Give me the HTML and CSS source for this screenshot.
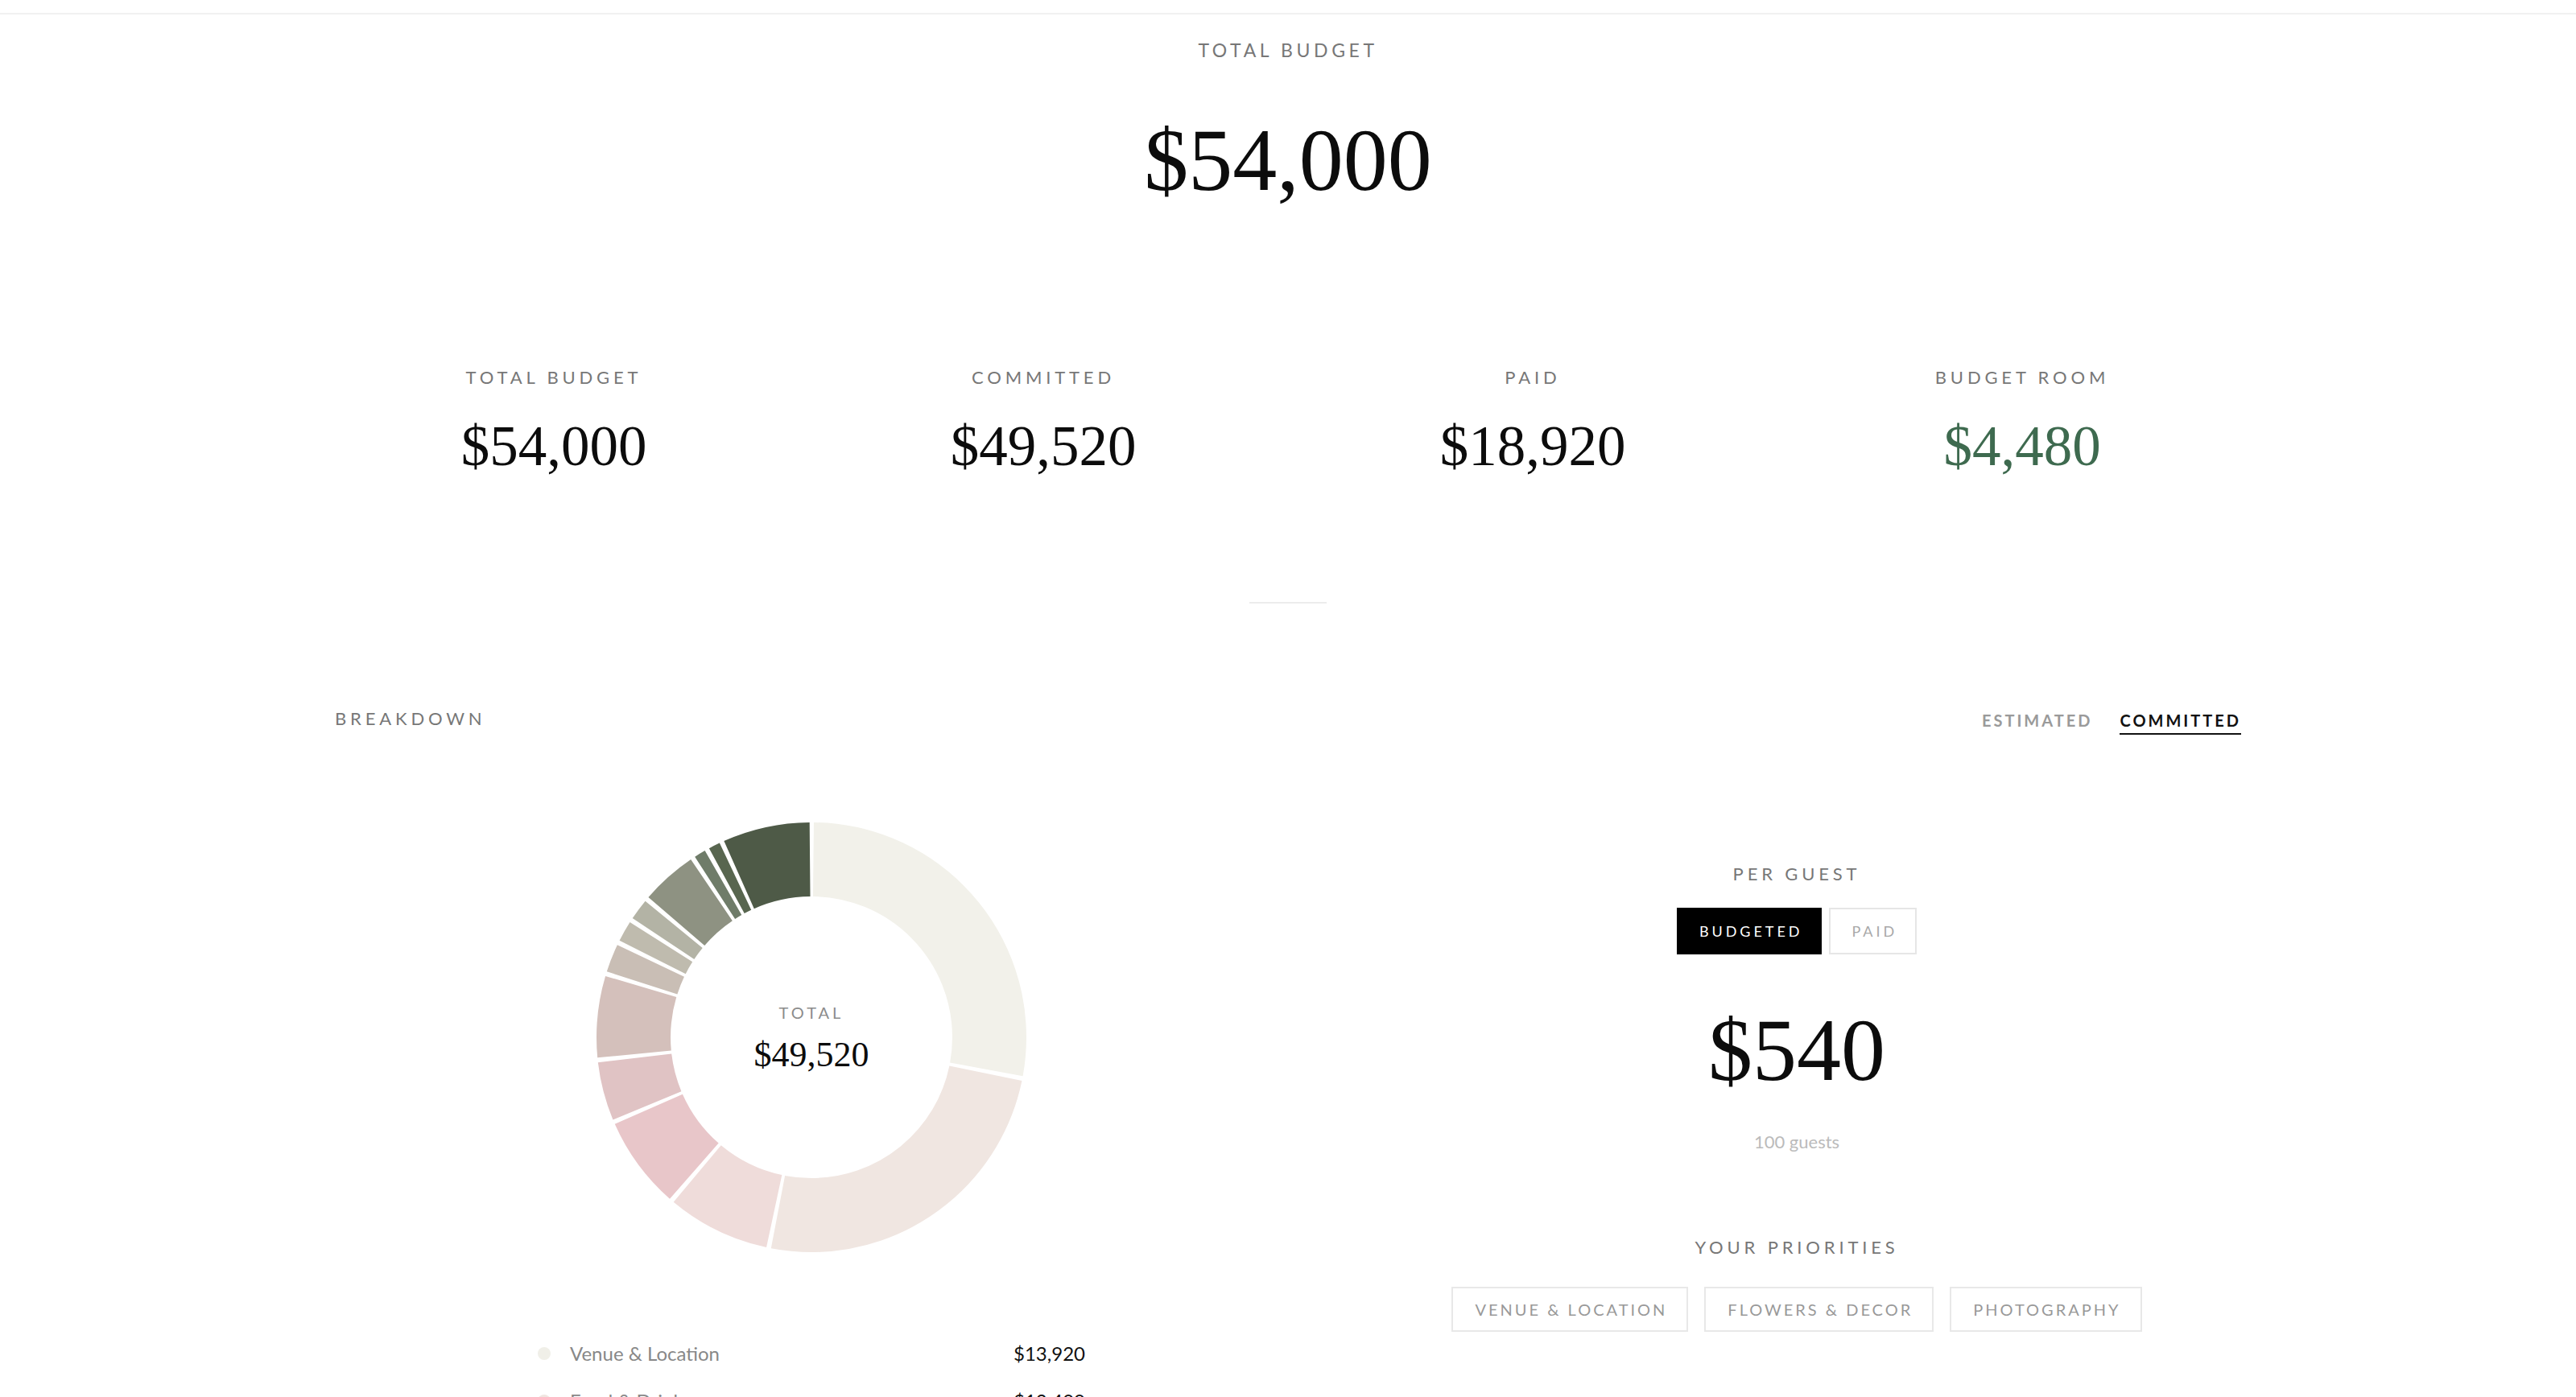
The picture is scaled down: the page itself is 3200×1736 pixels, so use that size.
FILE: index.html
```html
<!DOCTYPE html>
<html lang="en">
<head>
<meta charset="utf-8">
<title>Budget</title>
<link rel="stylesheet" href="styles.css">
</head>
<body>
<div class="topbar"></div>
<main class="page">
  <section class="hero">
    <div class="hero-title">TOTAL BUDGET</div>
    <div class="hero-amount">$54,000</div>
  </section>

  <section class="stats">
    <div class="stat">
      <div class="stat-label">TOTAL BUDGET</div>
      <div class="stat-value">$54,000</div>
    </div>
    <div class="stat">
      <div class="stat-label">COMMITTED</div>
      <div class="stat-value">$49,520</div>
    </div>
    <div class="stat">
      <div class="stat-label">PAID</div>
      <div class="stat-value">$18,920</div>
    </div>
    <div class="stat">
      <div class="stat-label">BUDGET ROOM</div>
      <div class="stat-value stat-value-green">$4,480</div>
    </div>
  </section>

  <div class="divider"></div>

  <section class="breakdown-head">
    <div class="section-label">BREAKDOWN</div>
    <div class="tabs">
      <span class="tab">ESTIMATED</span>
      <span class="tab tab-active">COMMITTED</span>
    </div>
  </section>

  <section class="breakdown-body">
    <div class="chart-col">
      <div class="donut">
        <svg class="donut-svg" width="540" height="540" viewBox="0 0 540 540">
          <g transform="rotate(-90 270 270)" fill="none" stroke-width="92">
            <circle cx="270" cy="270" r="221" stroke="#f2f1ea" stroke-dasharray="384.6 1400" stroke-dashoffset="-2.5"/>
            <circle cx="270" cy="270" r="221" stroke="#f0e6e1" stroke-dasharray="343.7 1400" stroke-dashoffset="-392.1"/>
            <circle cx="270" cy="270" r="221" stroke="#efdcda" stroke-dasharray="107.2 1400" stroke-dashoffset="-740.7"/>
            <circle cx="270" cy="270" r="221" stroke="#e8c6c9" stroke-dasharray="96.1 1400" stroke-dashoffset="-853.0"/>
            <circle cx="270" cy="270" r="221" stroke="#e0c3c4" stroke-dasharray="61.0 1400" stroke-dashoffset="-954.0"/>
            <circle cx="270" cy="270" r="221" stroke="#d4c0bb" stroke-dasharray="84.9 1400" stroke-dashoffset="-1020.0"/>
            <circle cx="270" cy="270" r="221" stroke="#c9beb5" stroke-dasharray="29.3 1400" stroke-dashoffset="-1109.8"/>
            <circle cx="270" cy="270" r="221" stroke="#bfbbae" stroke-dasharray="21.6 1400" stroke-dashoffset="-1144.2"/>
            <circle cx="270" cy="270" r="221" stroke="#b3b3a5" stroke-dasharray="22.0 1400" stroke-dashoffset="-1170.8"/>
            <circle cx="270" cy="270" r="221" stroke="#8e9282" stroke-dasharray="58.6 1400" stroke-dashoffset="-1197.8"/>
            <circle cx="270" cy="270" r="221" stroke="#6f7c69" stroke-dasharray="12.0 1400" stroke-dashoffset="-1261.4"/>
            <circle cx="270" cy="270" r="221" stroke="#58664f" stroke-dasharray="12.0 1400" stroke-dashoffset="-1278.4"/>
            <circle cx="270" cy="270" r="221" stroke="#4e5a47" stroke-dasharray="90.7 1400" stroke-dashoffset="-1295.4"/>
          </g>
        </svg>
        <div class="donut-center">
          <div class="donut-label">TOTAL</div>
          <div class="donut-value">$49,520</div>
        </div>
      </div>

      <ul class="legend">
        <li class="legend-row"><span class="dot dot-1"></span><span class="legend-name">Venue &amp; Location</span><span class="legend-amount">$13,920</span></li>
        <li class="legend-row"><span class="dot dot-2"></span><span class="legend-name">Food &amp; Drink</span><span class="legend-amount">$12,400</span></li>
        <li class="legend-row"><span class="dot dot-3"></span><span class="legend-name">Photography</span><span class="legend-amount">$4,000</span></li>
        <li class="legend-row"><span class="dot dot-4"></span><span class="legend-name">Flowers &amp; Decor</span><span class="legend-amount">$3,600</span></li>
        <li class="legend-row"><span class="dot dot-5"></span><span class="legend-name">Attire &amp; Beauty</span><span class="legend-amount">$2,350</span></li>
        <li class="legend-row"><span class="dot dot-6"></span><span class="legend-name">Music &amp; Entertainment</span><span class="legend-amount">$3,200</span></li>
      </ul>
    </div>

    <div class="guest-col">
      <div class="section-label">PER GUEST</div>
      <div class="toggle">
        <span class="toggle-btn toggle-btn-active">BUDGETED</span>
        <span class="toggle-btn">PAID</span>
      </div>
      <div class="guest-amount">$540</div>
      <div class="guest-count">100 guests</div>
      <div class="section-label priorities-label">YOUR PRIORITIES</div>
      <div class="chips">
        <span class="chip">VENUE &amp; LOCATION</span>
        <span class="chip">FLOWERS &amp; DECOR</span>
        <span class="chip">PHOTOGRAPHY</span>
      </div>
    </div>
  </section>
</main>
</body>
</html>
```

FILE: styles.css
```css
* {
  box-sizing: border-box;
}

html, body {
  margin: 0;
  padding: 0;
  background: #ffffff;
}

body {
  font-family: Lato, "Open Sans", "Liberation Sans", sans-serif;
  color: #111;
}

.topbar {
  height: 18px;
  border-bottom: 2px solid #f1f1f1;
}

.page {
  width: 2368px;
  margin: 0 auto;
}

/* hero */
.hero {
  padding-top: 31px;
  text-align: center;
}

.hero-title {
  font-size: 23px;
  line-height: 1.2;
  letter-spacing: 0.2em;
  color: #777;
}

.hero-amount {
  margin-top: 67px;
  font-family: "Liberation Serif", "DejaVu Serif", serif;
  font-size: 110px;
  line-height: 1;
  color: #0c0c0c;
}

/* stats */
.stats {
  margin-top: 202px;
  display: grid;
  grid-template-columns: repeat(4, 1fr);
  column-gap: 64px;
  text-align: center;
}

.stat-label {
  font-size: 22px;
  line-height: 1.2;
  letter-spacing: 0.22em;
  color: #777;
}

.stat-value {
  margin-top: 37px;
  font-family: "Liberation Serif", "DejaVu Serif", serif;
  font-size: 71px;
  line-height: 1;
  color: #0c0c0c;
}

.stat-value-green {
  color: #3e6a4f;
}

.divider {
  width: 96px;
  height: 2px;
  margin: 158px auto 0;
  background: #ececec;
}

/* breakdown */
.breakdown-head {
  margin-top: 130px;
  display: flex;
  justify-content: space-between;
  align-items: flex-start;
}

.section-label {
  font-size: 22px;
  line-height: 1.2;
  letter-spacing: 0.22em;
  color: #777;
}

.tabs {
  padding-top: 3px;
  display: flex;
  gap: 34px;
}

.tab {
  font-size: 20px;
  line-height: 24px;
  font-weight: 700;
  letter-spacing: 0.15em;
  color: #9a9a9a;
  padding-bottom: 4px;
  border-bottom: 2px solid transparent;
}

.tab-active {
  color: #111;
  border-bottom-color: #111;
}

.breakdown-body {
  margin-top: 106px;
  display: grid;
  grid-template-columns: 1184px 1fr;
}

.chart-col {
  display: flex;
  flex-direction: column;
  align-items: center;
}

.donut {
  position: relative;
  width: 540px;
  height: 540px;
}

.donut-svg {
  display: block;
}

.donut-center {
  position: absolute;
  inset: 0;
  display: flex;
  flex-direction: column;
  align-items: center;
  justify-content: center;
  padding-top: 2px;
}

.donut-label {
  font-size: 20px;
  line-height: 24px;
  letter-spacing: 0.2em;
  color: #8c8c8c;
}

.donut-value {
  margin-top: 19px;
  font-family: "Liberation Serif", "DejaVu Serif", serif;
  font-size: 44px;
  line-height: 1;
  color: #0c0c0c;
}

.legend {
  list-style: none;
  margin: 94px 0 0;
  padding: 0;
  width: 680px;
}

.legend-row {
  height: 59px;
  display: flex;
  align-items: center;
}

.dot {
  width: 16px;
  height: 16px;
  border-radius: 50%;
  margin-right: 24px;
  flex: none;
}

.dot-1 { background: #f0efe8; }
.dot-2 { background: #f0e6e1; }
.dot-3 { background: #efdcda; }
.dot-4 { background: #e8c6c9; }
.dot-5 { background: #e0c3c4; }
.dot-6 { background: #d4c0bb; }

.legend-name {
  flex: 1;
  font-size: 24px;
  line-height: 1.2;
  color: #888;
}

.legend-amount {
  font-size: 24px;
  line-height: 1.2;
  color: #111;
}

/* per guest */
.guest-col {
  padding-left: 80px;
  padding-top: 54px;
  display: flex;
  flex-direction: column;
  align-items: center;
  text-align: center;
}

.toggle {
  margin-top: 29px;
  display: flex;
  gap: 9px;
}

.toggle-btn {
  font-size: 18px;
  line-height: 22px;
  letter-spacing: 0.22em;
  padding: 16px 22px 16px 26px;
  border: 2px solid #e6e6e6;
  color: #a8a8a8;
}

.toggle-btn-active {
  background: #000;
  border-color: #000;
  color: #fff;
}

.guest-amount {
  margin-top: 64px;
  font-family: "Liberation Serif", "DejaVu Serif", serif;
  font-size: 110px;
  line-height: 1;
  color: #0c0c0c;
}

.guest-count {
  margin-top: 46px;
  font-size: 22px;
  line-height: 1.2;
  color: #bbb;
}

.priorities-label {
  margin-top: 104px;
}

.chips {
  margin-top: 36px;
  display: flex;
  gap: 20px;
}

.chip {
  font-size: 20px;
  line-height: 24px;
  letter-spacing: 0.15em;
  padding: 14px 24px 14px 27px;
  border: 2px solid #e8e8e8;
  color: #999;
}
```
